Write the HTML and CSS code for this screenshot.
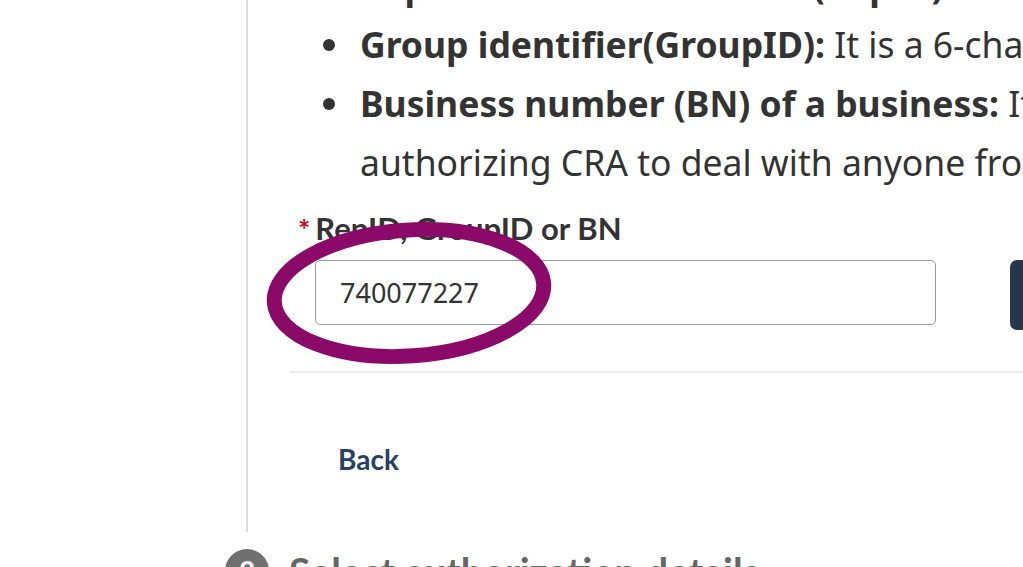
FILE: index.html
```html
<!DOCTYPE html>
<html lang="en">

<head>
    <meta charset="UTF-8">
    <meta name="viewport" content="width=device-width, initial-scale=1.0">
    <title>Authorize a representative</title>
    <link rel="stylesheet" href="styles.css">
</head>

<body>
    <div class="step">
        <ul class="defs">
            <li><strong>Representative identifier (RepID):</strong> It is a 7-character code</li>
            <li><strong>Group identifier(GroupID):</strong> It is a 6-character code</li>
            <li><strong>Business number (BN) of a business:</strong> It is a 9-digit number<br>authorizing CRA to deal with anyone from it</li>
        </ul>

        <form class="rep-form">
            <label class="field-label" for="repId"><span class="required">*</span>RepID, GroupID or BN</label>
            <div class="field-row">
                <input type="text" id="repId" name="repId" value="740077227">
                <button type="button" class="btn-primary">Next</button>
            </div>
        </form>

        <hr class="divider">

        <a href="#" class="back-link">Back</a>
    </div>

    <div class="next-step">
        <span class="step-num">3</span>
        <span class="step-title">Select authorization details</span>
    </div>

    <svg class="highlight" width="300" height="160" viewBox="0 0 300 160">
        <ellipse cx="151" cy="81" rx="135" ry="63" fill="none" stroke="#8b0a69" stroke-width="15" transform="rotate(-4 151 81)"></ellipse>
    </svg>
</body>

</html>
```

FILE: styles.css
```css
body {
    margin: 0;
    background-color: #fff;
    font-family: "Noto Sans", sans-serif;
    color: #333;
    width: 1023px;
    height: 567px;
    overflow: hidden;
    position: relative;
}

.step {
    display: flow-root;
    margin-left: 246px;
    width: 1200px;
    height: 532px;
    border-left: 2px solid #ddd;
    padding-left: 42px;
    box-sizing: border-box;
}

.defs {
    margin: -44px 0 0 0;
    padding-left: 70px;
    list-style: none;
    font-size: 35.5px;
    line-height: 59px;
}

.defs li {
    position: relative;
    white-space: nowrap;
}

.defs li::before {
    content: "";
    position: absolute;
    left: -37px;
    top: 24px;
    width: 12px;
    height: 12px;
    border-radius: 50%;
    background-color: #333;
}

.rep-form {
    margin-top: 20px;
    padding-left: 8px;
}

.field-label {
    display: block;
    font-family: Lato, sans-serif;
    font-weight: bold;
    font-size: 31px;
    line-height: 32px;
}

.required {
    color: #d3080c;
    font-size: 29px;
    margin-right: 5px;
}

.field-row {
    display: flex;
    align-items: flex-start;
    margin-top: 15px;
    padding-left: 17px;
}

.field-row input {
    width: 621px;
    height: 65px;
    box-sizing: border-box;
    border: 1px solid #999;
    border-radius: 5px;
    padding: 0 24px;
    font-family: "Noto Sans", sans-serif;
    font-size: 27px;
    color: #333;
    background-color: #fff;
}

.btn-primary {
    margin-left: 74px;
    width: 160px;
    height: 70px;
    border: none;
    border-radius: 7px;
    background-color: #26374a;
    color: #fff;
    font-size: 26px;
}

.divider {
    margin: 41px 0 0 0;
    border: none;
    border-top: 2px solid #eaeaea;
}

.back-link {
    display: inline-block;
    margin: 69px 0 0 48px;
    font-family: Lato, sans-serif;
    font-weight: bold;
    font-size: 28px;
    color: #284162;
    text-decoration: none;
}

.next-step {
    display: flex;
    align-items: flex-start;
    gap: 20px;
    margin: 17px 0 0 225px;
}

.step-num {
    flex: none;
    width: 44px;
    height: 44px;
    border-radius: 50%;
    background-color: #6f6f6f;
    color: #fff;
    font-family: Lato, sans-serif;
    font-weight: bold;
    font-size: 28px;
    line-height: 44px;
    text-align: center;
}

.step-title {
    font-family: Lato, sans-serif;
    font-weight: bold;
    font-size: 39px;
    line-height: 44px;
    color: #666;
    white-space: nowrap;
}

.highlight {
    position: absolute;
    left: 258px;
    top: 212px;
}
```
